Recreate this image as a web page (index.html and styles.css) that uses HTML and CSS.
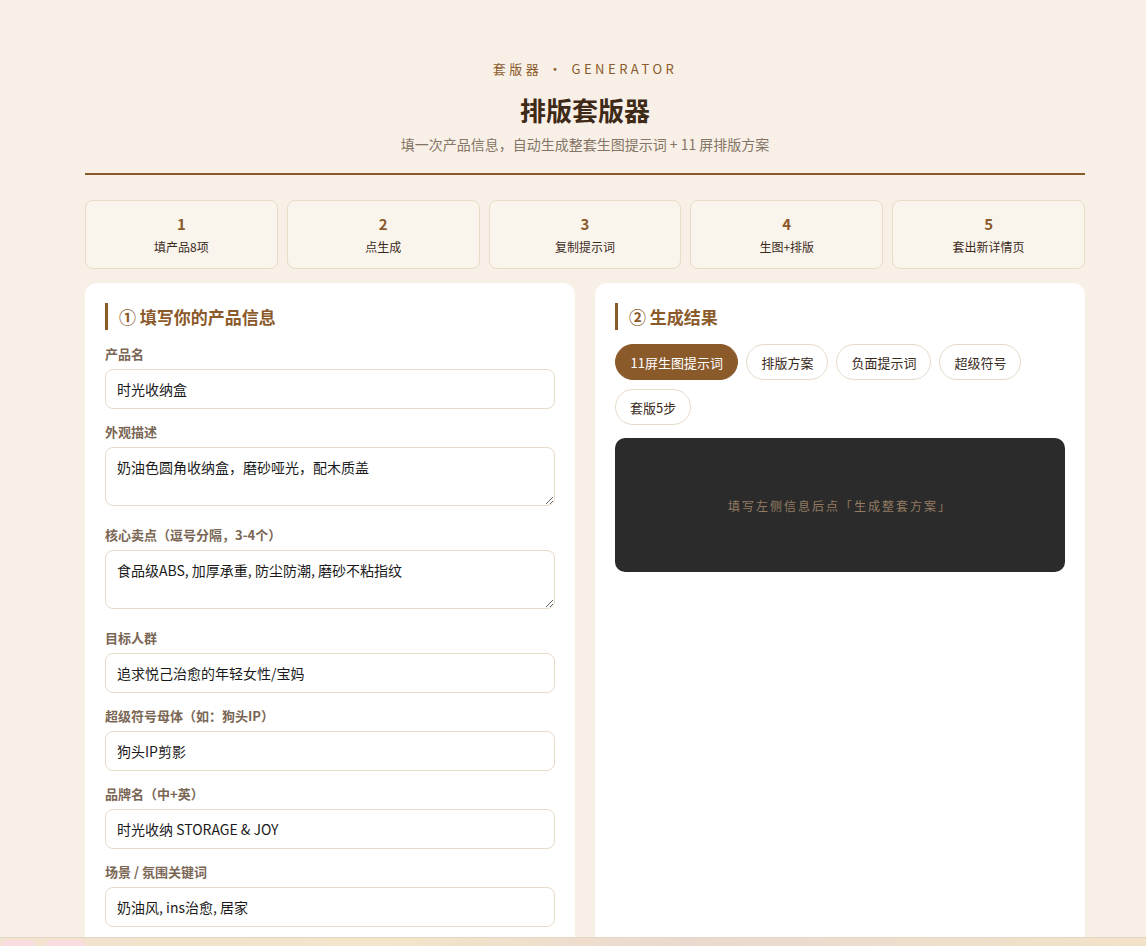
FILE: index.html
```html
<!DOCTYPE html>
<html lang="zh-CN">
<head>
<meta charset="utf-8">
<title>排版套版器</title>
<link rel="stylesheet" href="styles.css">
</head>
<body>
<div class="wrap">
  <header class="hero">
    <div class="kicker">套版器 · GENERATOR</div>
    <h1 class="title">排版套版器</h1>
    <p class="sub">填一次产品信息，自动生成整套生图提示词 + 11 屏排版方案</p>
  </header>

  <div class="steps">
    <div class="step"><div class="step-n">1</div><div class="step-t">填产品8项</div></div>
    <div class="step"><div class="step-n">2</div><div class="step-t">点生成</div></div>
    <div class="step"><div class="step-n">3</div><div class="step-t">复制提示词</div></div>
    <div class="step"><div class="step-n">4</div><div class="step-t">生图+排版</div></div>
    <div class="step"><div class="step-n">5</div><div class="step-t">套出新详情页</div></div>
  </div>

  <div class="panels">
    <section class="panel">
      <h2 class="panel-h">① 填写你的产品信息</h2>
      <div class="field">
        <label class="lbl">产品名</label>
        <input class="inp" type="text" value="时光收纳盒">
      </div>
      <div class="field field-ta">
        <label class="lbl">外观描述</label>
        <textarea class="inp ta">奶油色圆角收纳盒，磨砂哑光，配木质盖</textarea>
      </div>
      <div class="field field-ta">
        <label class="lbl">核心卖点（逗号分隔，3-4个）</label>
        <textarea class="inp ta">食品级ABS, 加厚承重, 防尘防潮, 磨砂不粘指纹</textarea>
      </div>
      <div class="field">
        <label class="lbl">目标人群</label>
        <input class="inp" type="text" value="追求悦己治愈的年轻女性/宝妈">
      </div>
      <div class="field">
        <label class="lbl">超级符号母体（如：狗头IP）</label>
        <input class="inp" type="text" value="狗头IP剪影">
      </div>
      <div class="field">
        <label class="lbl">品牌名（中+英）</label>
        <input class="inp" type="text" value="时光收纳 STORAGE &amp; JOY">
      </div>
      <div class="field">
        <label class="lbl">场景 / 氛围关键词</label>
        <input class="inp" type="text" value="奶油风, ins治愈, 居家">
      </div>
      <div class="field">
        <label class="lbl">主色调</label>
        <input class="inp" type="text" value="奶油白 + 原木色">
      </div>
      <button class="gen">生成整套方案</button>
    </section>

    <section class="panel">
      <h2 class="panel-h">② 生成结果</h2>
      <div class="tabs">
        <button class="tab active">11屏生图提示词</button>
        <button class="tab">排版方案</button>
        <button class="tab">负面提示词</button>
        <button class="tab">超级符号</button>
        <button class="tab">套版5步</button>
      </div>
      <div class="out">填写左侧信息后点「生成整套方案」</div>
    </section>
  </div>
</div>

<div class="dock">
  <span class="dock-tab t1"></span>
  <span class="dock-tab t2"></span>
</div>
</body>
</html>
```

FILE: styles.css
```css
* { box-sizing: border-box; }

html, body {
  margin: 0;
  background: #f8f0e6;
}

body {
  padding-left: 24px;
  font-family: "Noto Sans CJK SC", "Noto Sans", sans-serif;
  color: #3a2a1c;
}

.wrap {
  max-width: 1000px;
  margin: 0 auto;
  padding-bottom: 40px;
}

.hero {
  text-align: center;
  padding-top: 60px;
  padding-bottom: 19px;
  border-bottom: 2px solid #8b5a2b;
}

.kicker {
  font-size: 13px;
  line-height: 18px;
  letter-spacing: 3.5px;
  color: #8b5a2b;
}

.title {
  margin: 14px 0 0;
  font-size: 26px;
  line-height: 36px;
  font-weight: 700;
  color: #3e2a17;
}

.sub {
  margin: 6px 0 0;
  font-size: 14px;
  line-height: 20px;
  color: #857566;
}

.steps {
  display: grid;
  grid-template-columns: repeat(5, 1fr);
  gap: 9px;
  margin-top: 25px;
}

.step {
  height: 69px;
  background: #faf5ec;
  border: 1px solid #e8dcc8;
  border-radius: 8px;
  text-align: center;
  padding-top: 13px;
}

.step-n {
  font-size: 15px;
  line-height: 20px;
  font-weight: 700;
  color: #8b5a2b;
}

.step-t {
  margin-top: 4px;
  font-size: 12px;
  line-height: 18px;
  color: #3a2a1c;
}

.panels {
  display: grid;
  grid-template-columns: 1fr 1fr;
  gap: 20px;
  margin-top: 14px;
}

.panel {
  background: #fff;
  border-radius: 12px;
  padding: 20px 20px 24px;
}

.panel-h {
  margin: 0;
  border-left: 3px solid #8b5a2b;
  padding-left: 11px;
  font-size: 17px;
  line-height: 27px;
  font-weight: 700;
  color: #8b5a2b;
}

.field {
  margin-top: 15px;
}
.field + .field {
  margin-top: 14px;
}
.field-ta {
  padding-bottom: 6px;
}

.lbl {
  display: block;
  font-size: 13px;
  line-height: 18px;
  font-weight: 700;
  color: #7a6654;
  margin-bottom: 6px;
}

.inp {
  display: block;
  width: 100%;
  height: 40px;
  border: 1px solid #e6dac8;
  border-radius: 8px;
  background: #fff;
  padding: 0 11px;
  font-family: "Noto Sans CJK SC", "Noto Sans", sans-serif;
  font-size: 14px;
  color: #1a1a1a;
  outline: none;
}

.ta {
  height: 59px;
  padding: 8px 11px;
  line-height: 22px;
  resize: vertical;
}

.gen {
  display: block;
  width: 100%;
  margin-top: 18px;
  height: 44px;
  border: 0;
  border-radius: 8px;
  background: #8b5a2b;
  color: #fff;
  font-family: "Noto Sans CJK SC", sans-serif;
  font-size: 15px;
  font-weight: 700;
}

.tabs {
  display: flex;
  flex-wrap: wrap;
  gap: 9px 8px;
  margin-top: 14px;
}

.tab {
  height: 36px;
  padding: 0 14px;
  border: 1px solid #e6dac8;
  border-radius: 18px;
  background: #fff;
  font-family: "Noto Sans CJK SC", sans-serif;
  font-size: 13px;
  color: #3a2a1c;
}

.tab.active {
  background: #8b5a2b;
  border-color: #8b5a2b;
  color: #fff;
  padding: 0 14.5px;
}

.out {
  margin-top: 13px;
  height: 134px;
  background: #2b2b2b;
  border-radius: 10px;
  display: flex;
  align-items: center;
  justify-content: center;
  font-size: 12px;
  letter-spacing: 2px;
  color: #937c63;
}

.dock {
  position: fixed;
  left: 0;
  right: 0;
  bottom: 0;
  height: 9px;
  background: linear-gradient(90deg, #f2e2cf 0%, #f4e4c9 35%, #ebd9cf 60%, #f2e3c8 100%);
  border-top: 1px solid #e4d6c4;
}

.dock-tab {
  position: absolute;
  top: 2px;
  height: 10px;
  border-radius: 5px;
  background: #f9dde0;
}
.dock-tab.t1 { left: 2px; width: 33px; }
.dock-tab.t2 { left: 46px; width: 39px; }
```
